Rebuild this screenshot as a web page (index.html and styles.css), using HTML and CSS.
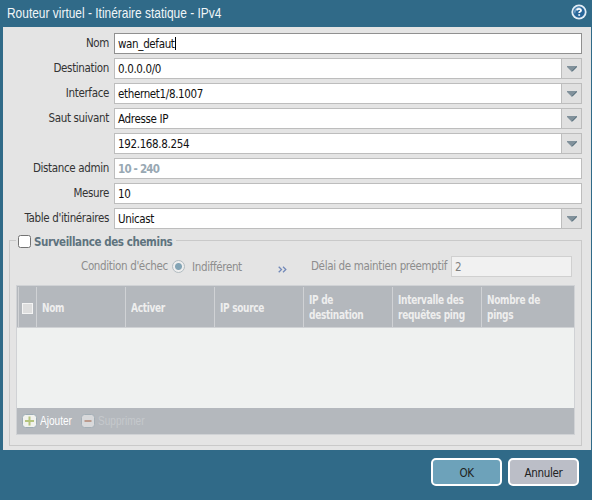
FILE: index.html
```html
<!DOCTYPE html>
<html lang="fr">
<head>
<meta charset="utf-8">
<title>Routeur virtuel</title>
<link rel="stylesheet" href="styles.css">
</head>
<body>
<div class="dialog">
  <header class="titlebar">
    <h1>Routeur virtuel - Itinéraire statique - IPv4</h1>
    <svg class="help" width="16" height="16" viewBox="0 0 16 16"><circle cx="8" cy="8" r="7.6" fill="#e4eef6"/><circle cx="8" cy="8" r="5.8" fill="#286699"/><path d="M3 8a5 5 0 0 1 7-4.6Q5 4 4 10z" fill="#75a2c6"/><path d="M6 6.4Q6.1 4.8 8 4.8T10 6.4Q10 7.2 8.9 7.8Q8.2 8.2 8.2 9M8.2 10.2V11.8" fill="none" stroke="#fff" stroke-width="1.8"/></svg>
  </header>
  <main class="body">
    <div class="row"><label>Nom</label><div class="field focus"><span class="value">wan_defaut</span><i class="caret"></i></div></div>
    <div class="row"><label>Destination</label><div class="field"><span class="value">0.0.0.0/0</span><b class="trigger"><svg width="10" height="6"><path d="M0 0H10V1L5.5 5.5H4.5L0 1z" fill="#81919b"/><path d="M9.8 .5L5 5.3" stroke="#526b79"/></svg></b></div></div>
    <div class="row"><label>Interface</label><div class="field"><span class="value">ethernet1/8.1007</span><b class="trigger"><svg width="10" height="6"><path d="M0 0H10V1L5.5 5.5H4.5L0 1z" fill="#81919b"/><path d="M9.8 .5L5 5.3" stroke="#526b79"/></svg></b></div></div>
    <div class="row"><label>Saut suivant</label><div class="field"><span class="value">Adresse IP</span><b class="trigger"><svg width="10" height="6"><path d="M0 0H10V1L5.5 5.5H4.5L0 1z" fill="#81919b"/><path d="M9.8 .5L5 5.3" stroke="#526b79"/></svg></b></div></div>
    <div class="row"><label></label><div class="field"><span class="value">192.168.8.254</span><b class="trigger"><svg width="10" height="6"><path d="M0 0H10V1L5.5 5.5H4.5L0 1z" fill="#81919b"/><path d="M9.8 .5L5 5.3" stroke="#526b79"/></svg></b></div></div>
    <div class="row"><label>Distance admin</label><div class="field"><span class="value hint">10 - 240</span></div></div>
    <div class="row"><label>Mesure</label><div class="field"><span class="value">10</span></div></div>
    <div class="row"><label>Table d'itinéraires</label><div class="field"><span class="value">Unicast</span><b class="trigger"><svg width="10" height="6"><path d="M0 0H10V1L5.5 5.5H4.5L0 1z" fill="#81919b"/><path d="M9.8 .5L5 5.3" stroke="#526b79"/></svg></b></div></div>
    <section class="group">
      <div class="legend"><i class="check"></i><span>Surveillance des chemins</span></div>
      <div class="options">
        <span class="cond">Condition d'échec</span>
        <i class="radio"></i>
        <span class="indif">Indifférent</span>
        <svg class="more" width="9" height="7"><path d="M.7 .8L3.5 3.5L.7 6.2M5 .8L7.8 3.5L5 6.2" fill="none" stroke="#7289b9" stroke-width="1.3"/></svg>
        <span class="delay">Délai de maintien préemptif</span>
        <div class="field small"><span class="value">2</span></div>
      </div>
      <div class="grid">
        <div class="head">
          <div class="tick"><i></i></div>
          <div><span>Nom</span></div><div><span>Activer</span></div><div><span>IP source</span></div><div><span>IP de<br>destination</span></div><div><span>Intervalle des<br>requêtes ping</span></div><div><span>Nombre de<br>pings</span></div>
        </div>
        <div class="rows"></div>
        <div class="tools">
          <svg width="15" height="14" viewBox="0 0 15 14"><rect x=".5" y=".5" width="14" height="13" rx="3" fill="#f1f2ee" stroke="#9cabb4"/><path d="M3 7H12M7.5 2.5V11.5" stroke="#b5c47d" stroke-width="2"/></svg>
          <span class="add">Ajouter</span>
          <svg width="15" height="14" viewBox="0 0 15 14"><rect x=".5" y=".5" width="13" height="13" rx="3" fill="#d8d9db" stroke="#a4afb6"/><path d="M3.5 7H10.5" stroke="#bb9a8d" stroke-width="2"/></svg>
          <span class="remove">Supprimer</span>
        </div>
      </div>
    </section>
  </main>
  <footer class="actions"><button class="ok">OK</button><button class="cancel">Annuler</button></footer>
</div>
</body>
</html>
```
FILE: styles.css
```css
* { box-sizing: border-box; }
body { margin: 0; }
.dialog { width: 592px; height: 500px; padding: 0 1px 0 3px; background: #306a88; font: 11.5px/15px "DejaVu Sans Condensed", "DejaVu Sans", sans-serif; font-stretch: condensed; letter-spacing: -.35px; color: #333; overflow: hidden; }
.titlebar { height: 27px; display: flex; justify-content: space-between; padding: 4px 4px 0; }
h1 { margin: 0; font: 15px/18px "Liberation Sans", sans-serif; letter-spacing: 0; color: #f1f6f8; white-space: nowrap; transform: scaleX(.796); transform-origin: left; }
.body { height: 423px; padding: 6px 9px 4px 6px; background: #e4e4e4; }
.row { display: flex; height: 21px; margin-bottom: 4px; }
.row label { width: 105px; padding: 3px 5px 0 0; text-align: right; white-space: nowrap; }
.field { flex: 1; height: 21px; display: flex; background: #fff; border: 1px solid #bdbdbd; color: #111; }
.focus { border-color: #909090; }
.value { padding: 3px 0 0 3px; white-space: nowrap; }
.hint { color: #98a8b3; font-weight: bold; letter-spacing: -.8px; }
.caret { width: 1px; height: 13px; margin-top: 3px; background: #000; }
.trigger { margin-left: auto; width: 20px; display: flex; align-items: center; justify-content: center; background: #e0e0e0; border-left: 1px solid #bdbdbd; }
.group { height: 206px; margin-top: 11px; border: 1px solid #c9c9c9; padding: 0 6px; }
.legend { display: flex; width: 160px; height: 16px; margin: -7px 0 0; background: #e4e4e4; font-weight: bold; color: #5e737e; white-space: nowrap; letter-spacing: -.4px; }
.legend span { padding-top: 1px; }
.check { flex: none; width: 13px; height: 13px; margin: 1px 3px 0 2px; background: #fff; border: 1px solid #737373; border-radius: 2.5px; }
.options { display: flex; height: 21px; margin-top: 6px; color: #8d8d8d; white-space: nowrap; }
.cond { width: 90px; margin-left: 65px; padding-top: 3px; }
.radio { width: 13px; height: 13px; margin: 4px 0 0 1px; border: 1px solid #b2bcc1; border-radius: 50%; background: radial-gradient(circle, #83a4b5 3px, #eee 4px); }
.indif { width: 86px; margin-left: 7px; padding-top: 4px; }
.more { margin-top: 10px; }
.delay { width: 140px; margin-left: 24px; padding-top: 3px; }
.small { flex: none; width: 121px; background: #f1f1f1; border-color: #d0d0d0; color: #808080; }
.grid { margin-top: 8px; height: 150px; width: 559px; border: 1px solid #d0d2d5; }
.head { display: grid; grid-template-columns: 19px repeat(5, 89px) 1fr; height: 42px; align-items: center; background: #b4b8bd; border-bottom: 1px solid #d0d2d5; color: #eee; font-weight: bold; white-space: nowrap; }
.head > div { height: 40px; display: flex; align-items: center; padding: 3px 0 0 5px; border-left: 1px solid #d0d2d5; }
.head span { transform: scaleX(.87); transform-origin: left; }
.head .tick { margin-left: 1px; padding-left: 3px; }
.tick i { width: 11px; height: 11px; background: #dedede; border: 1px solid #f4f4f4; }
.rows { height: 80px; background: #eff1f0; }
.tools { height: 26px; display: flex; align-items: center; padding: 0 5px; background: #b4b8bd; font: 12px/15px "Liberation Sans", sans-serif; letter-spacing: 0; white-space: nowrap; }
.tools span { transform: scaleX(.84); transform-origin: left; }
.add { width: 41px; margin-left: 3px; color: #fff; }
.remove { margin-left: 2px; color: #c5c8cc; }
.actions { display: flex; justify-content: flex-end; gap: 6px; padding: 8px 12px; }
.actions button { width: 71px; height: 28px; padding: 2px 0 0; border: 2px solid #fff; border-radius: 5px; font: inherit; letter-spacing: inherit; color: #222; }
.ok { background: #6da2ba; }
.cancel { background: #bbbec7; }
```
